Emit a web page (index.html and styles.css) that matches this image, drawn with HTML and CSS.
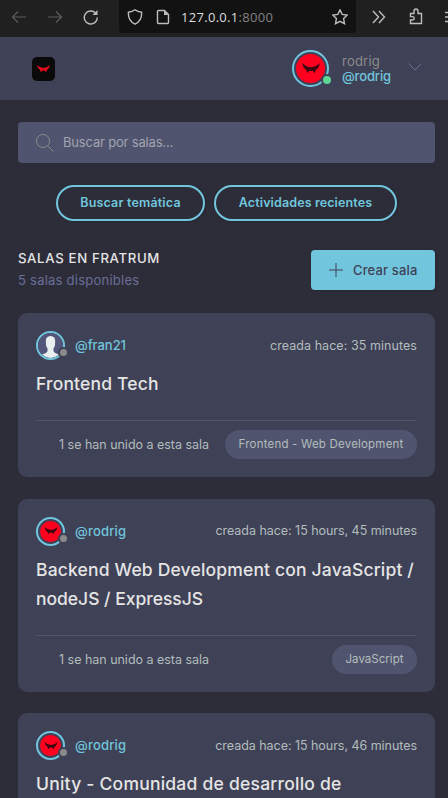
FILE: index.html
```
<!DOCTYPE html>
<html lang="es">
<head>
<meta charset="utf-8">
<title>Fratrum</title>
<link rel="stylesheet" href="styles.css">
</head>
<body>
<svg class="defs" width="0" height="0" aria-hidden="true">
  <symbol id="wings" viewBox="0 0 24 15"><path d="M0 0Q5 5.500 12 5.800Q19 5.500 24 0Q23 7 18.500 9.500L17 14L14.500 10.500L12 11L9.500 10.500L7 14L5.500 9.500Q1 7 0 0Z"/></symbol>
</svg>

<div class="browser">
  <svg class="nav-icon dim" viewBox="0 0 16 16"><path d="M15 8H1.500M7 2.500L1.500 8L7 13.500"/></svg>
  <svg class="nav-icon dim" viewBox="0 0 16 16"><path d="M1 8h13.500M9 2.500L14.500 8L9 13.500"/></svg>
  <svg class="nav-icon reload" viewBox="0 0 16 16"><path d="M14.300 8.500A6.500 6.500 0 1 1 12.500 4"/><path class="solid" d="M14.500 1v5h-5z"/></svg>
  <div class="urlbar">
    <svg class="shield" viewBox="0 0 16 16"><path d="M8 .8Q10.700 2.800 14.600 3.200Q15.200 11.500 8 15.200Q.8 11.500 1.400 3.200Q5.300 2.800 8 .8Z"/></svg>
    <svg class="page" viewBox="0 0 14 16"><path d="M2.500 1.500H8.500L12.500 5.500V13.500Q12.500 14.500 11.500 14.500H2.500Q1.500 14.500 1.500 13.500V2.500Q1.500 1.500 2.500 1.500Z"/><path class="solid" d="M8 1.500V6h4.500z"/></svg>
    <span class="url">127.0.0.1<span class="port">:8000</span></span>
    <svg class="star" viewBox="0 0 16 16"><path d="M8 .9L10.200 5.400L15.200 6.100L11.600 9.600L12.500 14.700L8 12.300L3.500 14.700L4.400 9.600L.8 6.100L5.800 5.400Z"/></svg>
  </div>
  <svg class="more" viewBox="0 0 14 14"><path d="M1 1l5.500 6L1 13M7 1l5.500 6L7 13"/></svg>
  <svg class="puzzle" viewBox="0 0 14 17"><path d="M1.500 5.500H5V3.200Q5 1 7 1T9 3.200V5.500H12.500V15.500H1.500V12H3.500Q5.200 12 5.200 10.300T3.500 8.600H1.500Z"/></svg>
  <svg class="menu" viewBox="0 0 14 12"><path d="M0 1.500h14M0 6h14M0 10.500h14"/></svg>
</div>

<header class="header">
  <span class="logo"><svg><use href="#wings"/></svg></span>
  <div class="user">
    <span class="avatar avatar-lg"><span class="face red"><svg><use href="#wings"/></svg></span><i class="status online"></i></span>
    <div class="names"><span class="name">rodrig</span><span class="handle">@rodrig</span></div>
    <svg class="chevron" viewBox="0 0 14 8"><path d="M.5 .5L7 7L13.500 .5"/></svg>
  </div>
</header>

<main class="main">
  <label class="search">
    <svg viewBox="0 0 18 18"><circle cx="7" cy="7" r="6.500"/><path d="M11.700 11.700L17.500 17.500"/></svg>
    <span>Buscar por salas...</span>
  </label>

  <div class="pills">
    <a class="pill first">Buscar temática</a>
    <a class="pill second">Actividades recientes</a>
  </div>

  <div class="list-head">
    <div>
      <h1>SALAS EN FRATRUM</h1>
      <p>5 salas disponibles</p>
    </div>
    <a class="create"><svg viewBox="0 0 14 14"><path d="M7 0v14M0 7h14"/></svg><span>Crear sala</span></a>
  </div>

  <div class="rooms">
    <article class="card">
      <div class="card-top">
        <span class="avatar"><span class="face person"><svg viewBox="0 0 25 25"><path d="M7.800 9Q7.500 3 12.500 3T17.200 9Q17.400 13 15.500 15.500V18Q16 20 21 21.500Q17 25 12.500 25T4 21.500Q9 20 9.500 18V15.500Q7.600 13 7.800 9Z"/></svg></span><i class="status"></i></span>
        <span class="author fran">@fran21</span>
        <span class="time">creada hace: 35 minutes</span>
      </div>
      <h2>Frontend Tech</h2>
      <div class="card-foot"><span class="joined">1 se han unido a esta sala</span><span class="tag wide">Frontend - Web Development</span></div>
    </article>

    <article class="card">
      <div class="card-top">
        <span class="avatar"><span class="face red"><svg><use href="#wings"/></svg></span><i class="status"></i></span>
        <span class="author">@rodrig</span>
        <span class="time long">creada hace: 15 hours, 45 minutes</span>
      </div>
      <h2>Backend Web Development con JavaScript /<br><span class="tight">nodeJS / ExpressJS</span></h2>
      <div class="card-foot"><span class="joined">1 se han unido a esta sala</span><span class="tag">JavaScript</span></div>
    </article>

    <article class="card">
      <div class="card-top">
        <span class="avatar"><span class="face red"><svg><use href="#wings"/></svg></span><i class="status"></i></span>
        <span class="author">@rodrig</span>
        <span class="time long">creada hace: 15 hours, 46 minutes</span>
      </div>
      <h2 class="unity">Unity - Comunidad de desarrollo de</h2>
    </article>
  </div>
</main>
</body>
</html>
```
FILE: styles.css
```
* { box-sizing: border-box; }
html, body { height: 798px; overflow: hidden; }
body {
  margin: 0;
  background: #2d2d39;
  color: #e5e5e5;
  font-family: Inter, "Liberation Sans", sans-serif;
}
svg { display: block; flex: none; fill: none; stroke: currentColor; }
.defs { position: absolute; }
.solid { fill: currentColor; stroke: none; }

/* browser toolbar */
.browser { display: flex; align-items: center; height: 37px; padding: 0 0 4px 11px; background: #202020; color: #bdbdbd; }
.browser svg { stroke-width: 1.4; }
.nav-icon { width: 16px; height: 16px; margin-right: 20px; }
.nav-icon.dim { color: #5c5c5c; stroke-width: 1.2; }
.urlbar { display: flex; flex: none; align-items: center; width: 237px; height: 33px; padding-left: 8px; background: #121212; border-radius: 0 0 4px 4px; }
.shield { width: 16px; height: 16px; }
.page { width: 14px; height: 16px; margin-left: 13px; }
.url { width: 151px; margin-left: 11px; font: 13px/18px "Open Sans", sans-serif; letter-spacing: .3px; color: #dedede; }
.port { color: #818181; }
.star { width: 16px; height: 16px; }
.more { width: 14px; height: 14px; margin-left: 16px; }
.puzzle { width: 14px; height: 17px; margin-left: 23px; }
.menu { width: 14px; height: 12px; margin-left: 22px; }

/* site header */
.header { display: flex; align-items: center; justify-content: space-between; height: 63px; padding: 0 26px 0 32px; background: #3f4156; }
.logo { display: grid; place-items: center; width: 23px; height: 24px; background: #0a0a0a; border-radius: 5px; }
.logo svg { width: 13px; height: 8px; color: #e30d1c; fill: currentColor; stroke: none; }
.user { display: flex; align-items: center; }
.names { display: flex; flex-direction: column; width: 73px; margin-left: 13px; font-size: 13px; line-height: 15px; letter-spacing: .22px; }
.name { color: #8b8b8b; }
.handle { color: #71c6dd; font-weight: 500; letter-spacing: -.15px; }
.chevron { width: 14px; height: 8px; margin: 0 0 3px -7px; color: #696d97; }

.avatar { position: relative; flex: none; width: 29px; height: 29px; padding: 2px; border: 2px solid #71c6dd; border-radius: 50%; }
.face { display: grid; place-items: center; width: 21px; height: 21px; border-radius: 50%; }
.red { background: #ff001f; }
.face svg { width: 14px; height: 8px; color: #3b0711; fill: currentColor; stroke: none; }
.person { width: 25px; height: 25px; margin: -2px; background: #51567a; overflow: hidden; }
.person svg { width: 25px; height: 25px; color: #e9eeef; }
.status { position: absolute; right: -6px; bottom: 0; width: 11px; height: 11px; border: 2.500px solid #3f4156; border-radius: 50%; background: #8b8b8b; }
.avatar-lg { width: 37px; height: 37px; }
.avatar-lg .face { width: 29px; height: 29px; }
.avatar-lg .face svg { width: 18px; height: 11px; }
.avatar-lg .status { right: -6px; bottom: -1px; width: 12px; height: 12px; }
.status.online { background: #5dd693; }

/* page */
.main { padding: 22px 13px 0 18px; }
.search { display: flex; align-items: center; height: 41px; padding-left: 18px; background: #51546e; border-radius: 4px; color: #a0a3b1; font-size: 13px; letter-spacing: -.18px; }
.search svg { width: 18px; height: 18px; margin-right: 9px; color: #8b8b8b; }
.search span { padding-bottom: 1px; }
.pills { display: flex; justify-content: center; gap: 9px; margin-top: 22px; }
.pill { display: grid; place-items: center; height: 36px; padding-bottom: 1px; border: 2px solid #71c6dd; border-radius: 18px; color: #71c6dd; font-size: 12.5px; font-weight: 600; box-shadow: 1px 1px 3px rgba(0, 0, 0, .15); }
.first { width: 149px; letter-spacing: .18px; }
.second { width: 183px; letter-spacing: .12px; }
.list-head { display: flex; justify-content: space-between; height: 40px; margin-top: 29px; }
h1, h2, p { margin: 0; font-weight: 500; }
h1 { font-size: 13.2px; line-height: 17px; letter-spacing: .66px; }
p { margin-top: 5px; color: #696d97; font-size: 13px; line-height: 17px; font-weight: 400; letter-spacing: .24px; }
.create { display: flex; align-items: center; width: 124px; height: 40px; padding-left: 18px; background: #71c6dd; border-radius: 4px; color: #3f4156; font-size: 13px; font-weight: 500; letter-spacing: .15px; box-shadow: 1px 1px 3px rgba(0, 0, 0, .15); }
.create svg { width: 14px; height: 14px; margin-right: 10px; }

/* room cards */
.rooms { display: grid; gap: 21.6px; margin-top: 23px; }
.card { padding: 18px; background: #3f4156; border-radius: 9px; }
.card-top { display: flex; align-items: center; height: 29px; }
.author { margin-left: 10px; padding-bottom: 1px; color: #71c6dd; font-size: 13px; font-weight: 500; letter-spacing: .18px; }
.fran { letter-spacing: -.05px; }
.time { margin-left: auto; padding-bottom: 1px; color: #b2bdbd; font-size: 12.5px; letter-spacing: .06px; }
.time.long { letter-spacing: -.04px; }
h2 { margin-top: 9px; font-size: 17.5px; line-height: 29px; letter-spacing: .17px; white-space: nowrap; }
.tight { letter-spacing: -.02px; }
.unity { letter-spacing: .23px; }
.card-foot { display: flex; align-items: center; justify-content: space-between; margin-top: 22px; padding: 9px 0 0 23px; border-top: 1px solid #51546e; }
.joined { color: #b2bdbd; font-size: 12.5px; letter-spacing: -.02px; }
.tag { padding: 0 13.500px; height: 29px; background: #51546e; border-radius: 15px; color: #b2bdbd; font-size: 11.5px; line-height: 29px; letter-spacing: .02px; }
.tag.wide { letter-spacing: .2px; }
```
